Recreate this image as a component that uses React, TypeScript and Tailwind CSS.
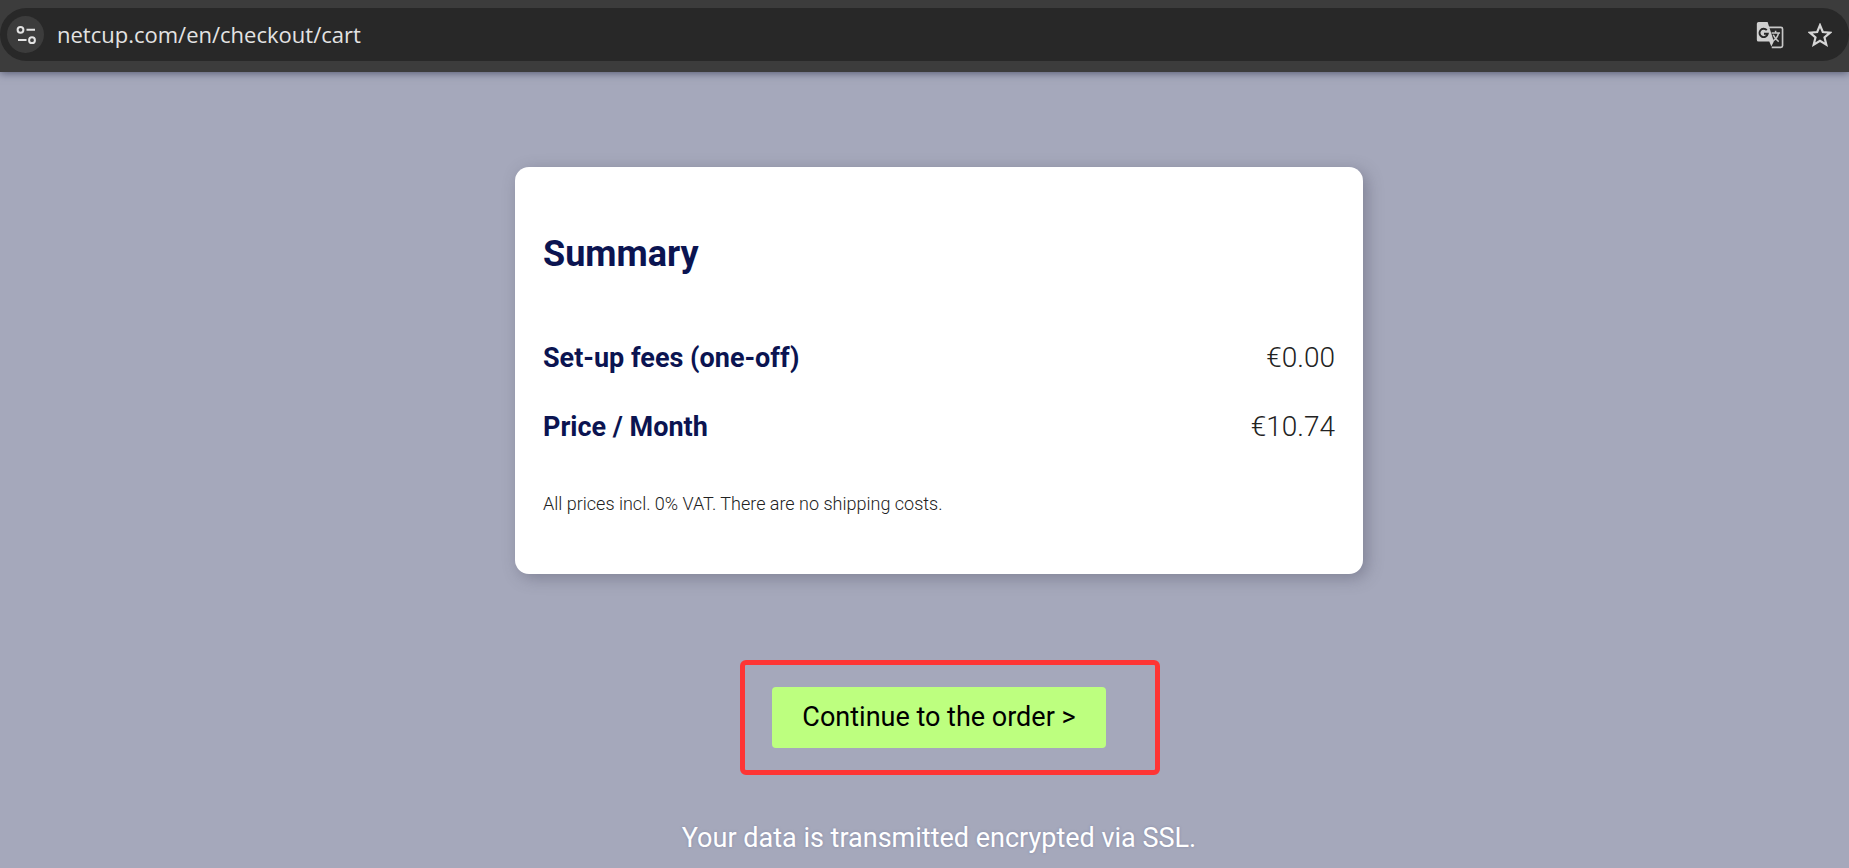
import { FormEvent, useState } from 'react';

const charges = [
  { label: 'Set-up fees (one-off)', amount: '€0.00' },
  { label: 'Price / Month', amount: '€10.74' },
];

const SiteSettingsIcon = () => (
  <svg viewBox="0 0 20 20" className="size-5" fill="none" stroke="currentColor" strokeWidth="2" aria-hidden="true">
    <circle cx="4.5" cy="4.8" r="2.9" />
    <path d="M10.5 4.8H19M2 15h8.5" />
    <circle cx="16" cy="15.2" r="2.9" />
  </svg>
);

const TranslateIcon = () => (
  <svg viewBox="0 0 27 27" className="size-7" aria-hidden="true">
    <path
      d="M12 6.1h12a1.6 1.6 0 0 1 1.6 1.6v16.2a1.6 1.6 0 0 1-1.6 1.6h-8.8"
      fill="none"
      stroke="#c7c7c7"
      strokeWidth="1.6"
    />
    <path d="M2.5 1h8.7l6 18.8-2.4 4.8-2-4.8H2.5A1.7 1.7 0 0 1 .8 18V2.7A1.7 1.7 0 0 1 2.5 1Z" fill="#d0d0d0" />
    <path d="M10.4 8.9a4 4 0 1 0 .9 3.4H7.7" fill="none" stroke="#282828" strokeWidth="1.9" />
    <path
      d="M15 11.5h8.2M18.9 9.5v2M21.7 11.7c-.7 3.4-2.8 5.9-5.1 7.4M16.6 13.2c1.2 2.8 3 5 5.3 6.6"
      fill="none"
      stroke="#c7c7c7"
      strokeWidth="1.5"
    />
  </svg>
);

const StarIcon = () => (
  <svg viewBox="0 0 24 24" className="size-6" fill="none" stroke="currentColor" strokeWidth="2.2" aria-hidden="true">
    <path d="m12 2.2 2.8 6.8 7.3.6-5.6 4.8 1.8 7.2-6.3-3.9-6.3 3.9 1.8-7.2L1.9 9.6l7.3-.6Z" />
  </svg>
);

const AddressBar = () => {
  const [url, setUrl] = useState('netcup.com/en/checkout/cart');

  return (
    <header className="relative h-[72px] bg-[#3c3c3c] pt-2 shadow-[0_1px_8px_rgba(40,44,70,0.65)]">
      <div className="flex h-[53px] items-center rounded-full bg-[#282828] pr-[17px] pl-[7px] text-[#d6d6d6]">
        <button
          type="button"
          aria-label="View site information"
          className="flex size-[37px] items-center justify-center rounded-full bg-[#3c3c3c] text-[#e3e3e3]"
        >
          <SiteSettingsIcon />
        </button>
        <input
          type="text"
          aria-label="Address"
          value={url}
          onChange={(e) => setUrl(e.target.value)}
          className="ml-[13px] min-w-0 flex-1 bg-transparent font-['Open_Sans',sans-serif] text-[22px] text-[#e3e3e3] outline-none"
        />
        <button type="button" aria-label="Translate this page">
          <TranslateIcon />
        </button>
        <button type="button" aria-label="Bookmark this page" className="ml-6">
          <StarIcon />
        </button>
      </div>
    </header>
  );
};

const Summary = () => (
  <section className="w-full max-w-[848px] rounded-[14px] bg-white px-7 pt-[60px] pb-[56px] shadow-[4px_4px_16px_rgba(60,60,80,0.35)]">
    <h2 className="text-[36px] leading-[54px] font-bold text-[#0b1451]">Summary</h2>
    <dl className="mt-14 flex flex-col gap-[27px] leading-[42px]">
      {charges.map(({ label, amount }) => (
        <div key={label} className="flex justify-between">
          <dt className="text-[27px] font-bold text-[#0b1451]">{label}</dt>
          <dd className="text-[28px] font-light text-[#222]">{amount}</dd>
        </div>
      ))}
    </dl>
    <p className="mt-[42px] text-[18px] leading-7 font-light text-[#222]">
      All prices incl. 0% VAT. There are no shipping costs.
    </p>
  </section>
);

export default function App() {
  const handleSubmit = (e: FormEvent) => e.preventDefault();

  return (
    <div className="min-h-screen bg-[#a5a8bb] font-['Roboto',sans-serif]">
      <AddressBar />
      <main className="flex flex-col items-center pt-[95px] pl-[29px]">
        <Summary />
        <form onSubmit={handleSubmit} className="relative mt-[113px]">
          <button type="submit" className="h-[61px] rounded bg-[#bdff7f] px-[30px] text-[27px] text-black">
            Continue to the order &gt;
          </button>
          <div className="pointer-events-none absolute -top-[27px] -right-[54px] -bottom-[27px] -left-[32px] rounded-md border-[5px] border-[#fe3535]" />
        </form>
        <p className="mt-[69px] text-[27px] leading-[42px] text-white [text-shadow:0_0_3px_#858aa8]">
          Your data is transmitted encrypted via SSL.
        </p>
      </main>
    </div>
  );
}
